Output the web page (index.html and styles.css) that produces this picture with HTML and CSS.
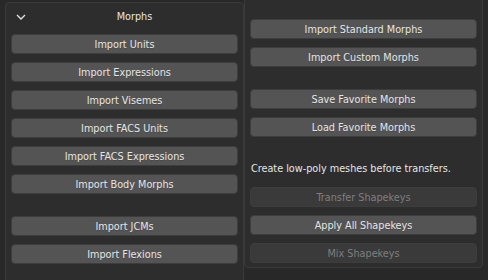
FILE: index.html
```html
<!DOCTYPE html>
<html>
<head>
  <title>Morphs</title>
  <link rel="stylesheet" href="styles.css">
</head>
<body>

  <div class="area">
    <div class="panel panel-left">
      <div class="panel-header">
        <svg class="chevron" width="10" height="6" viewBox="0 0 10 6">
          <path d="M1 1 L5 5 L9 1" fill="none" stroke="#e6e6e6" stroke-width="1.3"/>
        </svg>
        <span class="panel-title">Morphs</span>
      </div>
      <div class="panel-body">
        <button>Import Units</button>
        <button>Import Expressions</button>
        <button>Import Visemes</button>
        <button>Import FACS Units</button>
        <button>Import FACS Expressions</button>
        <button>Import Body Morphs</button>
        <button class="spaced">Import JCMs</button>
        <button>Import Flexions</button>
      </div>
    </div>

    <div class="panel panel-right">
      <div class="panel-body">
        <button>Import Standard Morphs</button>
        <button>Import Custom Morphs</button>
        <button class="spaced">Save Favorite Morphs</button>
        <button>Load Favorite Morphs</button>
        <div class="label spaced">Create low-poly meshes before transfers.</div>
        <button disabled>Transfer Shapekeys</button>
        <button>Apply All Shapekeys</button>
        <button disabled>Mix Shapekeys</button>
      </div>
    </div>
  </div>

</body>
</html>
```

FILE: styles.css
```css
* {
  box-sizing: border-box;
}

body {
  margin: 0;
  height: 280px;
  overflow: hidden;
  background: #282828;
  font-family: "DejaVu Sans Condensed", "DejaVu Sans", sans-serif;
  font-stretch: condensed;
  font-size: 10.75px;
  color: #e6e6e6;
}

.area {
  display: flex;
  align-items: flex-start;
  padding-left: 5px;
}

.panel {
  width: 239px;
  background: #2d2d2d;
  border: 1px solid #3a3a3a;
  border-radius: 4px;
}

.panel-left {
  margin-top: 2px;
  height: 300px;
}

.panel-right {
  margin-top: -10px;
  height: 278px;
}

.panel-header {
  display: flex;
  align-items: center;
  height: 27px;
  padding-left: 10px;
}

.chevron {
  margin-right: 4px;
}

.panel-title {
  flex: 1;
  text-align: center;
  padding-right: 4px;
}

.panel-body {
  display: flex;
  flex-direction: column;
  gap: 8px;
  padding: 4px 5px 0 5px;
}

.panel-right .panel-body {
  padding-top: 28px;
}

button {
  height: 20px;
  width: 100%;
  padding: 0;
  background: #545454;
  border: 1px solid #3d3d3d;
  border-radius: 4px;
  color: #e6e6e6;
  font-family: inherit;
  font-stretch: inherit;
  font-size: 10.75px;
  text-shadow: 0 1px 0 rgba(0,0,0,0.15);
}

button:disabled {
  background: #3a3a3a;
  color: #7f7f7f;
  text-shadow: none;
}

.spaced {
  margin-top: 14px;
}

.label {
  height: 20px;
  line-height: 20px;
  padding-left: 1px;
}
```
